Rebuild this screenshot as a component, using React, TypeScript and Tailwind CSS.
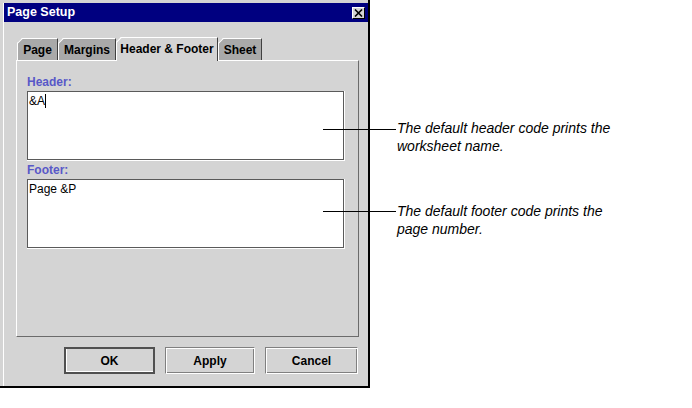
import React from 'react';

type TabProps = { label: string; width: string; selected?: boolean };

const Tab: React.FC<TabProps> = ({ label, width, selected }) => (
    <div
        className={`relative flex items-center justify-center border-t border-l border-r border-t-white border-l-white border-r-[#404040] text-[12px] font-bold leading-[14px] [clip-path:polygon(5px_0,100%_0,100%_100%,0_100%,0_5px)] ${width} ${
            selected ? 'z-10 h-[24px] -mb-px pb-[1px] bg-[#d4d4d4]' : 'h-[22px] bg-[#a9a9a9]'
        }`}
    >
        <span className="absolute left-[-3px] top-[1px] w-[8px] h-[2px] bg-white -rotate-45" />
        {label}
    </div>
);

const Field: React.FC<{ label: string; value: string; caret?: boolean }> = ({ label, value, caret }) => (
    <div className="flex flex-col">
        <div className="text-[12px] font-bold leading-[14px] text-[#5858c8]">{label}</div>
        <div className="mt-[2px] w-[318px] border-r border-b border-white">
            <div className="h-[69px] bg-white border border-[#5a5a5a] pl-[1px] pt-[2px] text-[12px] leading-[14px]">
                {value}
                {caret && <span className="inline-block w-px h-[14px] bg-black align-top" />}
            </div>
        </div>
    </div>
);

const Callout: React.FC<{ top: string; textTop: string; lines: string[] }> = ({ top, textTop, lines }) => (
    <>
        <div className={`absolute left-[323px] w-[73px] h-px bg-black ${top}`} />
        <div className={`absolute left-[397px] w-[270px] text-[14px] italic leading-[18px] ${textTop}`}>
            {lines.map((l) => (
                <div key={l}>{l}</div>
            ))}
        </div>
    </>
);

export default function App() {
    return (
        <div className="relative w-[692px] h-[408px] overflow-hidden bg-white text-black font-['Liberation_Sans',Arial,sans-serif]">
            {/* dialog window */}
            <div className="w-[370px] h-[388px] flex flex-col bg-[#d4d4d4] border-r-2 border-b-2 border-black pt-[3px] pl-[3px]">
                <div className="flex-1 flex flex-col border-l border-white">
                    <div className="h-[19px] flex items-center justify-between bg-[#000080] pl-[3px] pr-[3px]">
                        <span className="text-white text-[12.5px] font-bold leading-none">Page Setup</span>
                        <button className="w-[13px] h-[12px] flex items-center justify-center bg-[#d4d4d4] border-t border-l border-white border-r border-b border-r-black border-b-black">
                            <svg width="9" height="8" viewBox="0 0 9 8">
                                <path d="M1 0.5 L8 7.5 M8 0.5 L1 7.5" stroke="black" strokeWidth="1.6" />
                            </svg>
                        </button>
                    </div>

                    <div className="ml-[12px] mr-[9px] mt-[15px] flex flex-col">
                        <div className="flex items-end ml-px">
                            <Tab label="Page" width="w-[41px]" />
                            <Tab label="Margins" width="w-[58px]" />
                            <Tab label="Header & Footer" width="w-[102px]" selected />
                            <Tab label="Sheet" width="w-[44px]" />
                        </div>
                        <div className="h-[277px] border-t border-l border-white border-r border-b border-r-[#6b6b6b] border-b-[#6b6b6b] pl-[10px] pt-[14px] flex flex-col">
                            <Field label="Header:" value="&A" caret />
                            <div className="mt-[2px]">
                                <Field label="Footer:" value="Page &P" />
                            </div>
                        </div>
                    </div>

                    <div className="mt-[10px] pr-[10px] flex justify-end gap-[10px] text-[12px] font-bold">
                        <button className="w-[91px] h-[27px] border-2 border-[#505050] shadow-[inset_1px_-1px_0_#ffffff]">OK</button>
                        <button className="w-[90px] h-[27px] border border-t-[#808080] border-l-[#808080] border-r-white border-b-white shadow-[inset_1px_1px_0_#ffffff,inset_-1px_-1px_0_#808080]">Apply</button>
                        <button className="w-[93px] h-[27px] border border-t-[#808080] border-l-[#808080] border-r-white border-b-white shadow-[inset_1px_1px_0_#ffffff,inset_-1px_-1px_0_#808080]">Cancel</button>
                    </div>
                </div>
            </div>

            <Callout top="top-[129px]" textTop="top-[119px]" lines={['The default header code prints the', 'worksheet name.']} />
            <Callout top="top-[211px]" textTop="top-[202px]" lines={['The default footer code prints the', 'page number.']} />
        </div>
    );
}
